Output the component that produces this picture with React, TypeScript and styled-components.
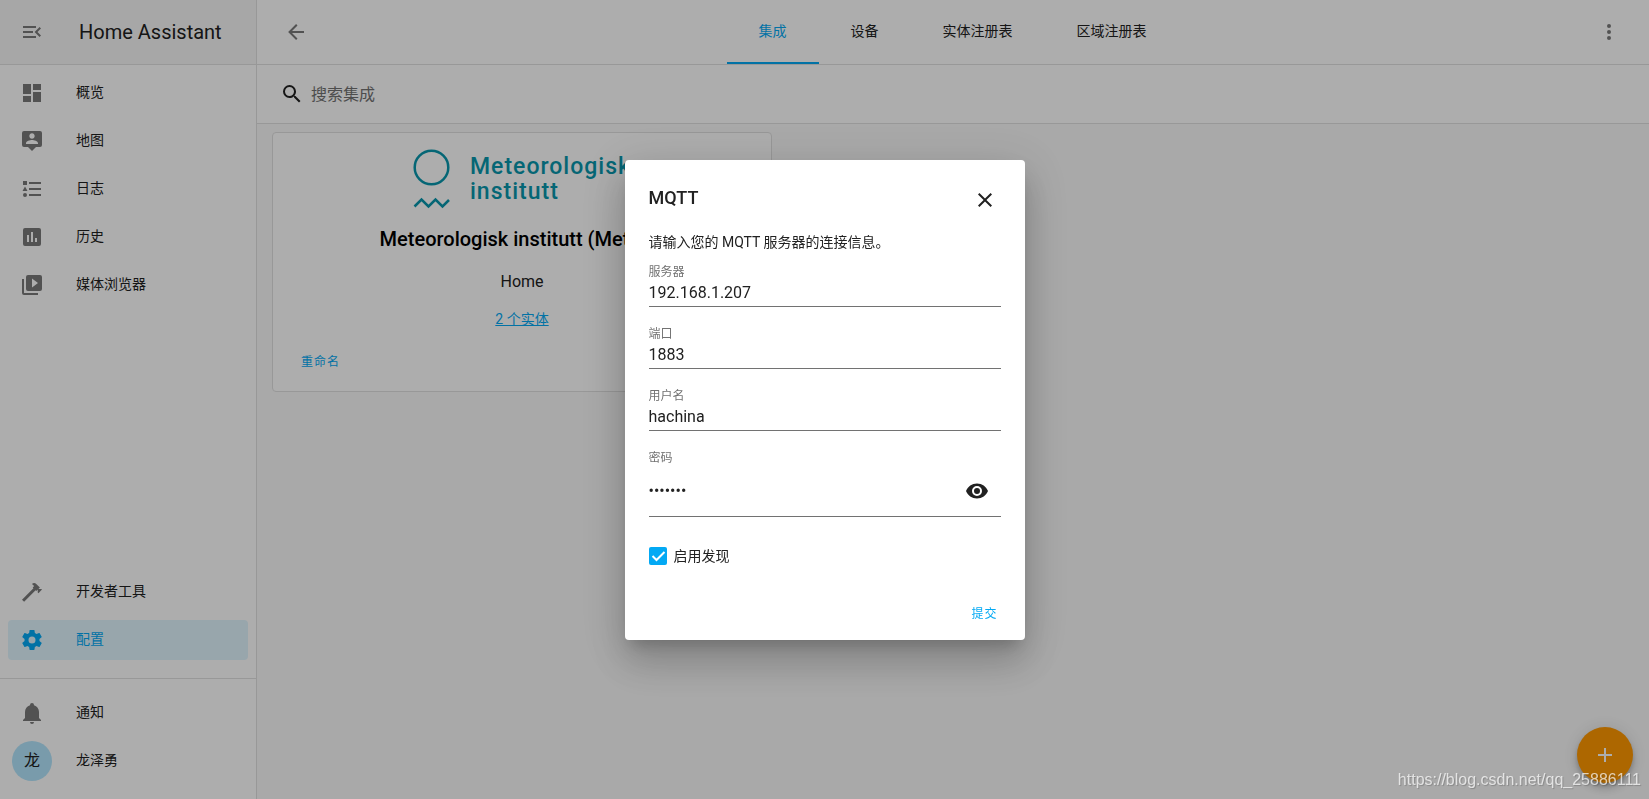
import React from "react";
import styled, { createGlobalStyle, css } from "styled-components";

const GlobalStyle = createGlobalStyle`
  *, *::before, *::after { box-sizing: border-box; }
  body {
    margin: 0;
    background: #fafafa;
    color: #212121;
    font-family: Roboto, "Noto Sans CJK SC", sans-serif;
    font-size: 14px;
    line-height: 20px;
  }
  a { color: inherit; text-decoration: none; }
  button, input { font: inherit; color: inherit; }
  button { border: 0; background: none; padding: 0; cursor: pointer; }
  h1, h2, h3, p { margin: 0; font-weight: 400; }
`;

const paths = {
  menuOpen:
    "M21,15.61L19.59,17L14.58,12L19.59,7L21,8.39L17.44,12L21,15.61M3,6H16V8H3V6M3,13V11H13V13H3M3,18V16H16V18H3Z",
  dashboard: "M13,3V9H21V3M13,21H21V11H13M3,21H11V15H3M3,13H11V3H3V13Z",
  map: "M20,2A2,2 0 0,1 22,4V16A2,2 0 0,1 20,18H16L12,22L8,18H4A2,2 0 0,1 2,16V4A2,2 0 0,1 4,2H20M12,4.3C10.5,4.3 9.3,5.5 9.3,7C9.3,8.5 10.5,9.7 12,9.7C13.5,9.7 14.7,8.5 14.7,7C14.7,5.5 13.5,4.3 12,4.3M18,15V14.1C18,12.1 14,11 12,11C10,11 6,12.1 6,14.1V15H18Z",
  log: "M5,9.5L7.5,14H2.5L5,9.5M3,4H7V8H3V4M5,20A2,2 0 0,0 7,18A2,2 0 0,0 5,16A2,2 0 0,0 3,18A2,2 0 0,0 5,20M9,5V7H21V5H9M9,19H21V17H9V19M9,13H21V11H9V13Z",
  history:
    "M9,17H7V10H9V17M13,17H11V7H13V17M17,17H15V13H17V17M19,3H5A2,2 0 0,0 3,5V19A2,2 0 0,0 5,21H19A2,2 0 0,0 21,19V5A2,2 0 0,0 19,3Z",
  media:
    "M4,6H2V20A2,2 0 0,0 4,22H18V20H4V6M20,2H8A2,2 0 0,0 6,4V16A2,2 0 0,0 8,18H20A2,2 0 0,0 22,16V4A2,2 0 0,0 20,2M12,14.5V5.5L18,10L12,14.5Z",
  hammer:
    "M2,19.63L13.43,8.2L12.72,7.5L14.14,6.07L12,3.89C13.2,2.7 15.09,2.7 16.27,3.89L19.87,7.5L18.45,8.91H21.29L22,9.62L18.45,13.21L17.74,12.5V9.62L16.27,11.04L15.56,10.33L4.13,21.76L2,19.63Z",
  cog: "M12,15.5A3.5,3.5 0 0,1 8.5,12A3.5,3.5 0 0,1 12,8.5A3.5,3.5 0 0,1 15.5,12A3.5,3.5 0 0,1 12,15.5M19.43,12.97C19.47,12.65 19.5,12.33 19.5,12C19.5,11.67 19.47,11.34 19.43,11L21.54,9.37C21.73,9.22 21.78,8.95 21.66,8.73L19.66,5.27C19.54,5.05 19.27,4.96 19.05,5.05L16.56,6.05C16.04,5.66 15.5,5.32 14.87,5.07L14.5,2.42C14.46,2.18 14.25,2 14,2H10C9.75,2 9.54,2.18 9.5,2.42L9.13,5.07C8.5,5.32 7.96,5.66 7.44,6.05L4.95,5.05C4.73,4.96 4.46,5.05 4.34,5.27L2.34,8.73C2.21,8.95 2.27,9.22 2.46,9.37L4.57,11C4.53,11.34 4.5,11.67 4.5,12C4.5,12.33 4.53,12.65 4.57,12.97L2.46,14.63C2.27,14.78 2.21,15.05 2.34,15.27L4.34,18.73C4.46,18.95 4.73,19.03 4.95,18.95L7.44,17.94C7.96,18.34 8.5,18.68 9.13,18.93L9.5,21.58C9.54,21.82 9.75,22 10,22H14C14.25,22 14.46,21.82 14.5,21.58L14.87,18.93C15.5,18.67 16.04,18.34 16.56,17.94L19.05,18.95C19.27,19.03 19.54,18.95 19.66,18.73L21.66,15.27C21.78,15.05 21.73,14.78 21.54,14.63L19.43,12.97Z",
  bell: "M21,19V20H3V19L5,17V11C5,7.9 7.03,5.17 10,4.29C10,4.19 10,4.1 10,4A2,2 0 0,1 12,2A2,2 0 0,1 14,4C14,4.1 14,4.19 14,4.29C16.97,5.17 19,7.9 19,11V17L21,19M14,21A2,2 0 0,1 12,23A2,2 0 0,1 10,21",
  back: "M20,11V13H8L13.5,18.5L12.08,19.92L4.16,12L12.08,4.08L13.5,5.5L8,11H20Z",
  search:
    "M9.5,3A6.5,6.5 0 0,1 16,9.5C16,11.11 15.41,12.59 14.44,13.73L14.71,14H15.5L20.5,19L19,20.5L14,15.5V14.71L13.73,14.44C12.59,15.41 11.11,16 9.5,16A6.5,6.5 0 0,1 3,9.5A6.5,6.5 0 0,1 9.5,3M9.5,5C7,5 5,7 5,9.5C5,12 7,14 9.5,14C12,14 14,12 14,9.5C14,7 12,5 9.5,5Z",
  dots: "M12,16A2,2 0 0,1 14,18A2,2 0 0,1 12,20A2,2 0 0,1 10,18A2,2 0 0,1 12,16M12,10A2,2 0 0,1 14,12A2,2 0 0,1 12,14A2,2 0 0,1 10,12A2,2 0 0,1 12,10M12,4A2,2 0 0,1 14,6A2,2 0 0,1 12,8A2,2 0 0,1 10,6A2,2 0 0,1 12,4Z",
  close:
    "M19,6.41L17.59,5L12,10.59L6.41,5L5,6.41L10.59,12L5,17.59L6.41,19L12,13.41L17.59,19L19,17.59L13.41,12L19,6.41Z",
  eye: "M12,9A3,3 0 0,0 9,12A3,3 0 0,0 12,15A3,3 0 0,0 15,12A3,3 0 0,0 12,9M12,17A5,5 0 0,1 7,12A5,5 0 0,1 12,7A5,5 0 0,1 17,12A5,5 0 0,1 12,17M12,4.5C7,4.5 2.73,7.61 1,12C2.73,16.39 7,19.5 12,19.5C17,19.5 21.27,16.39 23,12C21.27,7.61 17,4.5 12,4.5Z",
  plus: "M19,13H13V19H11V13H5V11H11V5H13V11H19V13Z",
};

type IconName = keyof typeof paths;

const Svg = styled.svg`
  display: block;
  flex: none;
  width: 24px;
  height: 24px;
  fill: currentColor;
`;

const Icon = ({ name }: { name: IconName }) => (
  <Svg viewBox="0 0 24 24" aria-hidden="true">
    <path d={paths[name]} />
  </Svg>
);

const Page = styled.div`
  display: flex;
  min-height: 100vh;
`;

/* Sidebar */

const Sidebar = styled.aside`
  display: flex;
  flex-direction: column;
  flex: none;
  width: 257px;
  padding-bottom: 14px;
  border-right: 1px solid #e0e0e0;
  background: #fff;
`;

const SidebarHeader = styled.header`
  display: flex;
  align-items: center;
  gap: 23px;
  height: 65px;
  padding: 0 8px;
  border-bottom: 1px solid #e0e0e0;
  background: #f7f7f7;
`;

const SidebarTitle = styled.h1`
  font-size: 20px;
  line-height: 24px;
`;

const NavList = styled.nav<{ $grow?: boolean }>`
  display: flex;
  flex-direction: column;
  gap: 8px;
  padding: 8px;
  flex: ${(p) => (p.$grow ? 1 : "none")};
`;

const AccountList = styled(NavList)`
  margin-top: 10px;
  padding: 14px 8px 4px;
  border-top: 1px solid #e0e0e0;
`;

const NavItem = styled.a<{ $active?: boolean }>`
  display: flex;
  align-items: center;
  height: 40px;
  border-radius: 4px;
  ${(p) =>
    p.$active &&
    css`
      background: rgba(3, 169, 244, 0.12);
      color: #03a9f4;
    `}
`;

const NavIcon = styled.span<{ $active?: boolean }>`
  display: flex;
  justify-content: center;
  width: 48px;
  margin-right: 20px;
  color: ${(p) => (p.$active ? "#03a9f4" : "#7a7a7a")};
`;

const NavLabel = styled.span`
  padding-bottom: 2px;
`;

const Avatar = styled.span`
  display: flex;
  align-items: center;
  justify-content: center;
  width: 40px;
  height: 40px;
  border-radius: 50%;
  background: #b3e5fc;
  color: #212121;
  font-size: 16px;
`;

/* Main panel */

const Main = styled.main`
  display: flex;
  flex-direction: column;
  flex: 1;
  min-width: 0;
`;

const Toolbar = styled.header`
  display: flex;
  align-items: center;
  justify-content: space-between;
  height: 65px;
  padding: 0 16px 0 15px;
  border-bottom: 1px solid #e0e0e0;
  background: #fff;
`;

const IconButton = styled.button<{ $tone?: string }>`
  display: flex;
  align-items: center;
  justify-content: center;
  flex: none;
  width: 48px;
  height: 48px;
  color: ${(p) => p.$tone ?? "#7a7a7a"};
`;

const Tabs = styled.nav`
  display: flex;
  align-self: stretch;
`;

const Tab = styled.a<{ $active?: boolean }>`
  display: flex;
  align-items: center;
  padding: 0 32px;
  border-bottom: 2px solid ${(p) => (p.$active ? "#03a9f4" : "transparent")};
  color: ${(p) => (p.$active ? "#03a9f4" : "#212121")};
`;

const SearchBar = styled.label`
  display: flex;
  align-items: center;
  gap: 7px;
  height: 59px;
  padding: 0 23px;
  border-bottom: 1px solid #e0e0e0;
  background: #fff;
`;

const SearchInput = styled.input`
  flex: 1;
  min-width: 0;
  padding: 2px 0 0;
  border: 0;
  outline: 0;
  background: none;
  font-size: 16px;
  line-height: 24px;
  &::placeholder {
    color: #727272;
    opacity: 1;
  }
`;

const CardGrid = styled.section`
  display: grid;
  grid-template-columns: repeat(auto-fit, minmax(300px, 1fr));
  gap: 16px;
  padding: 8px 16px 16px 15px;
`;

const Card = styled.article`
  display: flex;
  flex-direction: column;
  align-items: center;
  max-width: 500px;
  padding: 16px 16px 11px;
  border: 1px solid #e0e0e0;
  border-radius: 4px;
  background: #fff;
`;

const Brand = styled.div`
  display: flex;
  align-items: center;
  gap: 20px;
  height: 60px;
  color: #0897ad;
  font-family: Roboto, sans-serif;
  font-size: 23px;
  font-weight: 500;
  line-height: 25px;
  letter-spacing: 1px;
`;

const BrandMark = styled.svg`
  display: block;
  width: 37px;
  height: 60px;
  fill: none;
  stroke: currentColor;
  stroke-width: 2.5;
`;

const CardTitle = styled.h2`
  margin-top: 16px;
  color: #000;
  font-size: 20px;
  font-weight: 500;
  line-height: 28px;
`;

const CardPlace = styled.h3`
  margin-top: 17px;
  font-size: 16px;
  line-height: 24px;
`;

const EntityLink = styled.a`
  margin: 15px 0;
  color: #03a9f4;
  text-decoration: underline;
`;

const TextButton = styled.button`
  height: 36px;
  padding: 0 8px;
  color: #03a9f4;
  font-size: 12px;
  letter-spacing: 1px;
`;

const CardActions = styled.footer`
  display: flex;
  align-self: stretch;
  padding: 0 4px;
`;

const Fab = styled.button`
  position: fixed;
  right: 16px;
  bottom: 16px;
  display: flex;
  align-items: center;
  justify-content: center;
  width: 56px;
  height: 56px;
  border-radius: 50%;
  background: #ff9800;
  color: #fff;
  box-shadow: 0 3px 5px -1px rgba(0, 0, 0, 0.2), 0 6px 10px 0 rgba(0, 0, 0, 0.14),
    0 1px 18px 0 rgba(0, 0, 0, 0.12);
`;

/* Dialog */

const Scrim = styled.div`
  position: fixed;
  inset: 0;
  display: flex;
  align-items: center;
  justify-content: center;
  background: rgba(0, 0, 0, 0.32);
`;

const Dialog = styled.form`
  display: flex;
  flex-direction: column;
  width: 400px;
  padding: 16px 24px 8px;
  border-radius: 4px;
  background: #fff;
  box-shadow: 0 11px 15px -7px rgba(0, 0, 0, 0.2), 0 24px 38px 3px rgba(0, 0, 0, 0.14),
    0 9px 46px 8px rgba(0, 0, 0, 0.12);
`;

const DialogHeader = styled.header`
  display: flex;
  justify-content: space-between;
  height: 56px;
  margin-right: -8px;
`;

const DialogTitle = styled.h2`
  padding-top: 10px;
  font-size: 18px;
  font-weight: 500;
  line-height: 24px;
`;

const DialogText = styled.p`
  margin-bottom: 1px;
`;

const Field = styled.div`
  display: flex;
  flex-direction: column;
  padding: 8px 0;
`;

const FieldLabel = styled.label`
  color: #727272;
  font-size: 12px;
  line-height: 22px;
`;

const FieldRow = styled.div<{ $tall?: boolean }>`
  display: flex;
  align-items: center;
  height: ${(p) => (p.$tall ? 48 : 24)}px;
  padding-bottom: 2px;
  border-bottom: 1px solid #727272;
`;

const FieldInput = styled.input`
  flex: 1;
  min-width: 0;
  padding: 0;
  border: 0;
  outline: 0;
  background: none;
  font-size: 16px;
  line-height: 20px;
`;

const CheckRow = styled.label`
  display: flex;
  align-items: center;
  gap: 7px;
  height: 40px;
  margin-top: 11px;
`;

const Checkbox = styled.input`
  appearance: none;
  flex: none;
  width: 18px;
  height: 18px;
  margin: 0;
  border-radius: 2px;
  background: #03a9f4
    url("data:image/svg+xml,%3Csvg xmlns='http://www.w3.org/2000/svg' viewBox='0 0 18 18'%3E%3Cpath d='M3.5 9l4 4 8-8' fill='none' stroke='white' stroke-width='2'/%3E%3C/svg%3E");
`;

const DialogActions = styled.footer`
  display: flex;
  justify-content: flex-end;
  margin: 20px -5px 0 0;
`;

const Watermark = styled.div`
  position: fixed;
  right: 8px;
  bottom: 8px;
  color: rgba(255, 255, 255, 0.7);
  font-family: "Liberation Sans", sans-serif;
  font-size: 16px;
  line-height: 22px;
  text-shadow: 1px 1px 1px rgba(0, 0, 0, 0.2);
  pointer-events: none;
`;

type Nav = { icon: IconName; label: string; active?: boolean };

const primary: Nav[] = [
  { icon: "dashboard", label: "概览" },
  { icon: "map", label: "地图" },
  { icon: "log", label: "日志" },
  { icon: "history", label: "历史" },
  { icon: "media", label: "媒体浏览器" },
];

const tools: Nav[] = [
  { icon: "hammer", label: "开发者工具" },
  { icon: "cog", label: "配置", active: true },
];

const tabs = ["集成", "设备", "实体注册表", "区域注册表"];

const fields = [
  { id: "broker", label: "服务器", value: "192.168.1.207" },
  { id: "port", label: "端口", value: "1883" },
  { id: "username", label: "用户名", value: "hachina" },
];

const NavLink = ({ icon, label, active }: Nav) => (
  <NavItem href="#" $active={active}>
    <NavIcon $active={active}>
      <Icon name={icon} />
    </NavIcon>
    <NavLabel>{label}</NavLabel>
  </NavItem>
);

export default function App() {
  return (
    <>
      <GlobalStyle />
      <Page>
        <Sidebar>
          <SidebarHeader>
            <IconButton aria-label="菜单">
              <Icon name="menuOpen" />
            </IconButton>
            <SidebarTitle>Home Assistant</SidebarTitle>
          </SidebarHeader>
          <NavList $grow>
            {primary.map((item) => (
              <NavLink key={item.label} {...item} />
            ))}
          </NavList>
          <NavList>
            {tools.map((item) => (
              <NavLink key={item.label} {...item} />
            ))}
          </NavList>
          <AccountList>
            <NavLink icon="bell" label="通知" />
            <NavItem href="#">
              <NavIcon>
                <Avatar>龙</Avatar>
              </NavIcon>
              <NavLabel>龙泽勇</NavLabel>
            </NavItem>
          </AccountList>
        </Sidebar>

        <Main>
          <Toolbar>
            <IconButton aria-label="返回">
              <Icon name="back" />
            </IconButton>
            <Tabs>
              {tabs.map((tab, i) => (
                <Tab key={tab} href="#" $active={i === 0}>
                  {tab}
                </Tab>
              ))}
            </Tabs>
            <IconButton aria-label="更多">
              <Icon name="dots" />
            </IconButton>
          </Toolbar>
          <SearchBar>
            <Icon name="search" />
            <SearchInput type="text" placeholder="搜索集成" aria-label="搜索集成" />
          </SearchBar>
          <CardGrid>
            <Card>
              <Brand>
                <BrandMark viewBox="0 0 37 60" aria-hidden="true">
                  <circle cx="18.5" cy="18.5" r="16.8" />
                  <path d="M1.5 57.5L8.5 50.5L15.5 57.5L22.5 50.5L29.5 57.5L36 51" />
                </BrandMark>
                <span>
                  Meteorologisk
                  <br />
                  institutt
                </span>
              </Brand>
              <CardTitle>Meteorologisk institutt (Met.no)</CardTitle>
              <CardPlace>Home</CardPlace>
              <EntityLink href="#">2 个实体</EntityLink>
              <CardActions>
                <TextButton>重命名</TextButton>
              </CardActions>
            </Card>
          </CardGrid>
        </Main>
      </Page>

      <Fab aria-label="添加集成">
        <Icon name="plus" />
      </Fab>

      <Scrim>
        <Dialog role="dialog" aria-labelledby="dialog-title" onSubmit={(e) => e.preventDefault()}>
          <DialogHeader>
            <DialogTitle id="dialog-title">MQTT</DialogTitle>
            <IconButton type="button" $tone="#212121" aria-label="关闭">
              <Icon name="close" />
            </IconButton>
          </DialogHeader>
          <DialogText>请输入您的 MQTT 服务器的连接信息。</DialogText>
          {fields.map((f) => (
            <Field key={f.id}>
              <FieldLabel htmlFor={f.id}>{f.label}</FieldLabel>
              <FieldRow>
                <FieldInput id={f.id} type="text" defaultValue={f.value} />
              </FieldRow>
            </Field>
          ))}
          <Field>
            <FieldLabel htmlFor="password">密码</FieldLabel>
            <FieldRow $tall>
              <FieldInput id="password" type="password" defaultValue="hachina" />
              <IconButton type="button" $tone="#212121" aria-label="显示密码">
                <Icon name="eye" />
              </IconButton>
            </FieldRow>
          </Field>
          <CheckRow>
            <Checkbox type="checkbox" defaultChecked />
            启用发现
          </CheckRow>
          <DialogActions>
            <TextButton type="submit">提交</TextButton>
          </DialogActions>
        </Dialog>
      </Scrim>

      <Watermark>https://blog.csdn.net/qq_25886111</Watermark>
    </>
  );
}
